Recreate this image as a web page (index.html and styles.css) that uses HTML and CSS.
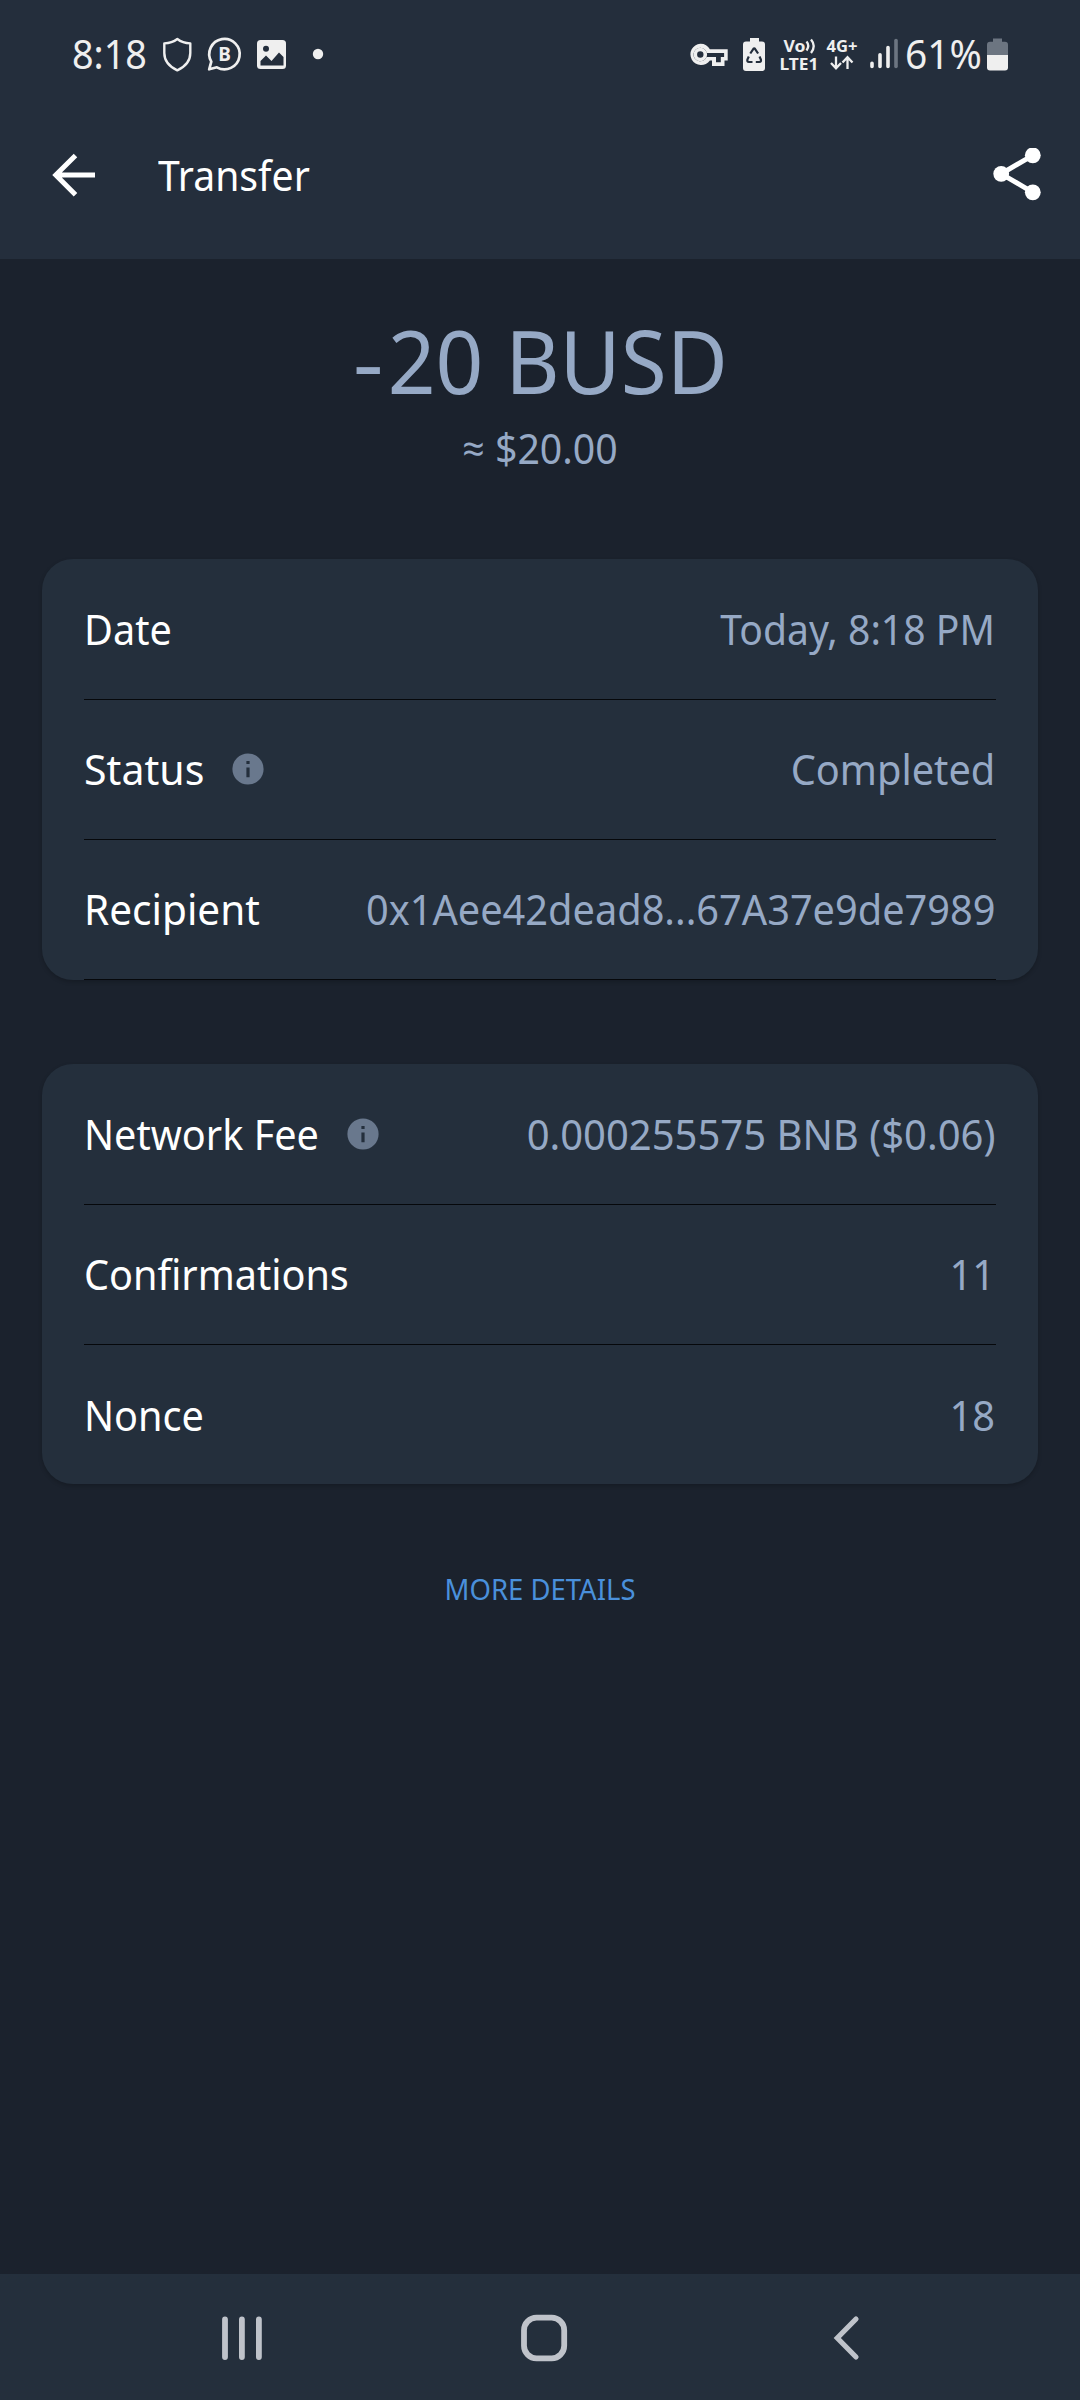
FILE: index.html
```html
<!DOCTYPE html>
<html lang="en">
<head>
<meta charset="utf-8">
<title>Transfer</title>
<link rel="stylesheet" href="styles.css">
</head>
<body>
<div class="screen">
  <header class="top">
    <div class="status">
      <span class="clock">8:18</span>
      <svg class="status-left" width="170" height="40" viewBox="160 34 170 40">
        <path d="M177.3 39c-3.500 2.700-8 4.200-13 4.400v9.600c0 8 5 13.600 13 17.300c8-3.700 13-9.300 13-17.300v-9.600c-5-.2-9.500-1.700-13-4.400z" fill="none" stroke="#efefef" stroke-width="2.400" stroke-linejoin="round"/>
        <path d="M211.300 61.700a15.200 15.200 0 1 1 5.600 5.600l-7.700 2z" fill="none" stroke="#efefef" stroke-width="2.700" stroke-linejoin="round"/>
        <text x="224.600" y="61" class="b-mark">B</text>
        <rect x="257" y="40" width="29" height="29" rx="3.500" fill="#efefef"/>
        <circle cx="266" cy="48.800" r="3" fill="#242e3c"/>
        <path d="M260.500 65.500v-4.500l5.500-5.500l5.500 5.500l7.500-8.500l4.500 4.500v8.500z" fill="#242e3c"/>
        <circle cx="318" cy="54" r="5.200" fill="#efefef"/>
      </svg>
      <svg class="status-right" width="214" height="40" viewBox="688 34 214 40">
        <path fill-rule="evenodd" fill="#efefef" d="M700.300 43.700a10.700 10.700 0 0 1 9.600 5.600H727.700v11.200h-3.200v5.400H712v-5.400h-2.100a10.700 10.700 0 1 1-9.600-16.800zM700.300 47.700a6.800 6.800 0 1 0 6.300 9.200H716v5.400h4.800v-5.400h3.300v-3.800h-17.300a6.800 6.800 0 0 0-6.500-5.400z"/>
        <circle cx="700.300" cy="54.500" r="5" fill="none" stroke="#efefef" stroke-width="3.600"/>
        <path fill="#efefef" d="M750 38h9v3.500h3a3 3 0 0 1 3 3V68a3 3 0 0 1-3 3h-16a3 3 0 0 1-3-3V44.500a3 3 0 0 1 3-3h4z"/>
        <path fill="none" stroke="#242e3c" stroke-width="2.200" d="M750.300 53.500l3.100-4.700q.8-1 1.600 0l3.100 4.700M748.800 56.500l-1.400 3q-.5 2.500 1.500 2.500h3.600M759.500 56.500l1.400 3q.5 2.500-1.500 2.500h-3.600"/>
        <text x="783.500" y="51.700" class="net" textLength="22" lengthAdjust="spacingAndGlyphs">Vo</text>
        <path d="M806.500 41.500q3.500 4 0 9M811 39.500q5.500 6.500 0 13.500" fill="none" stroke="#efefef" stroke-width="2.300"/>
        <text x="779.500" y="69.500" class="net" textLength="39" lengthAdjust="spacingAndGlyphs">LTE1</text>
        <text x="826.500" y="51.700" class="net" textLength="31" lengthAdjust="spacingAndGlyphs">4G+</text>
        <path d="M836 56.500v11.500M831 63l5 5.300l5-5.300M847.500 69v-11.500M842.500 62.500l5-5.300l5 5.300" fill="none" stroke="#efefef" stroke-width="2.300"/>
        <g stroke="#efefef" stroke-width="3.600" stroke-linecap="round">
          <path d="M872 63.300v3.200M880 54.800v11.700M888 47.500v19"/>
          <path d="M896 40.500v26" stroke="#6c7581"/>
        </g>
      </svg>
      <span class="percent">61%</span>
      <svg class="battery" width="21" height="33" viewBox="987 37 21 33">
        <path d="M993 37.500h9v3.300h3a3 3 0 0 1 3 3V54h-21V43.800a3 3 0 0 1 3-3h3z" fill="#6c7581"/>
        <path d="M987 54h21v12.500a3 3 0 0 1-3 3h-15a3 3 0 0 1-3-3z" fill="#efefef"/>
      </svg>
    </div>
    <div class="appbar">
      <svg class="back" width="44" height="44" viewBox="52 152.300 44 44"><path d="M75.500 154.800L55.800 174.400L75.500 194M56 174.400H95" fill="none" stroke="#fff" stroke-width="5"/></svg>
      <h1 class="title">Transfer</h1>
      <svg class="share" width="48" height="54" viewBox="992.500 147.500 48 54"><path d="M1032.300 154.800L1000.700 173.300L1032.300 191.800" fill="none" stroke="#fff" stroke-width="5"/><g fill="#fff"><circle cx="1032.300" cy="154.800" r="7.900"/><circle cx="1000.700" cy="173.300" r="7.900"/><circle cx="1032.300" cy="191.800" r="7.900"/></g></svg>
    </div>
  </header>
  <main class="content">
    <div class="amount"><span class="minus">-</span>20 BUSD</div>
    <div class="fiat">≈ $20.00</div>
    <section class="card">
      <div class="row"><span class="label">Date</span><span class="value date">Today, 8:18 PM</span></div>
      <div class="row">
        <span class="label status-label">Status</span>
        <svg class="info" width="32" height="32" viewBox="0 0 32 32"><circle cx="16" cy="16" r="15.600" fill="#69788d"/><path d="M14.400 8h3.200v3h-3.200zM14.400 14.500h3.200v9.700h-3.200z" fill="#242f3c"/></svg>
        <span class="value">Completed</span>
      </div>
      <div class="row"><span class="label recipient">Recipient</span><span class="value">0x1Aee42dead8...67A37e9de7989</span></div>
    </section>
    <section class="card second">
      <div class="row">
        <span class="label fee-label">Network Fee</span>
        <svg class="info" width="32" height="32" viewBox="0 0 32 32"><circle cx="16" cy="16" r="15.600" fill="#69788d"/><path d="M14.400 8h3.200v3h-3.200zM14.400 14.500h3.200v9.700h-3.200z" fill="#242f3c"/></svg>
        <span class="value fee">0.000255575 BNB ($0.06)</span>
      </div>
      <div class="row"><span class="label">Confirmations</span><span class="value">11</span></div>
      <div class="row"><span class="label">Nonce</span><span class="value">18</span></div>
    </section>
    <div class="more">MORE DETAILS</div>
  </main>
  <nav class="navbar">
    <svg width="44" height="50" viewBox="219.500 2313.500 44 50"><path d="M224.500 2320v37.500M241.400 2320v37.500M258.400 2320v37.500" stroke="#bfc3ca" stroke-width="5.800" stroke-linecap="round"/></svg>
    <svg width="50" height="50" viewBox="518.600 2313.500 50 50"><rect x="523.600" y="2318.200" width="40.200" height="40.600" rx="12.500" fill="none" stroke="#bfc3ca" stroke-width="5.800"/></svg>
    <svg width="36" height="50" viewBox="825 2313.500 36 50"><path d="M856 2319.500L837.300 2338.500L856 2357.500" fill="none" stroke="#bfc3ca" stroke-width="5.200" stroke-linecap="round"/></svg>
  </nav>
</div>
</body>
</html>
```
FILE: styles.css
```css
* { box-sizing: border-box; margin: 0; padding: 0; }
body { background: #1b222d; font-family: "Noto Sans", "Open Sans", sans-serif; color: #fff; }
svg { display: block; flex: none; }

.screen { width: 1080px; height: 2400px; display: flex; flex-direction: column; overflow: hidden; }

.top { height: 259px; background: #242e3c; }
.status { height: 108px; padding-left: 72px; display: flex; align-items: center; font-size: 39.500px; line-height: 54px; color: #efefef; }
.clock { width: 88px; white-space: nowrap; transform: scaleX(.956); transform-origin: left; }
.status-right { margin-left: 358px; }
.percent { width: 81px; margin-left: 3px; white-space: nowrap; transform: scaleX(.985); transform-origin: left; }
.battery { margin-left: 1px; }
.b-mark { font: 700 19px "Noto Sans", sans-serif; fill: #efefef; text-anchor: middle; }
.net { font: 700 16px "Noto Sans", sans-serif; fill: #efefef; }

.appbar { height: 133px; padding: 0 39.500px 0 52px; display: flex; align-items: center; }
.title { margin-left: 62px; font-size: 42px; font-weight: 400; line-height: 56px; transform: scaleX(.932); transform-origin: left; }
.share { margin-left: auto; }

.content { flex: 1; padding: 41px 42px 0; color: #96a9c5; }
.amount { height: 119px; font-size: 88px; line-height: 120px; text-align: center; transform: scaleX(.951); }
.minus { display: inline-block; margin-right: 9px; transform: scaleX(1.15); transform-origin: left; }
.fiat { height: 58px; font-size: 42px; line-height: 58px; text-align: center; transform: scaleX(.935); }

.card { margin-top: 82px; padding: 1px 42px 0; border-radius: 31px; background: #242f3c; box-shadow: 0 2px 4px rgba(0, 0, 0, .2); }
.second { margin-top: 84px; }
.row { height: 140px; padding-bottom: 1px; border-bottom: 1px solid #06080b; display: flex; align-items: center; font-size: 42px; line-height: 58px; white-space: nowrap; }
.second .row:last-child { height: 139px; padding-bottom: 0; border-bottom: 0; }
.label { color: #fff; transform: scaleX(.943); transform-origin: left; }
.status-label { width: 148px; transform: scaleX(.978); }
.recipient { transform: scaleX(.965); }
.fee-label { width: 263px; }
.value { margin-left: auto; transform: translateX(-1px) scaleX(.946); transform-origin: right; }
.date { transform: translateX(-1px) scaleX(.931); }
.fee { transform: translateX(-1px) scaleX(.952); }

.more { margin-top: 84px; font-size: 29.400px; line-height: 42px; text-align: center; color: #4a90db; transform: scaleX(.935); }

.navbar { height: 126px; padding: 2px 219px 0 219.500px; background: #242f3c; display: flex; justify-content: space-between; align-items: center; }
```
